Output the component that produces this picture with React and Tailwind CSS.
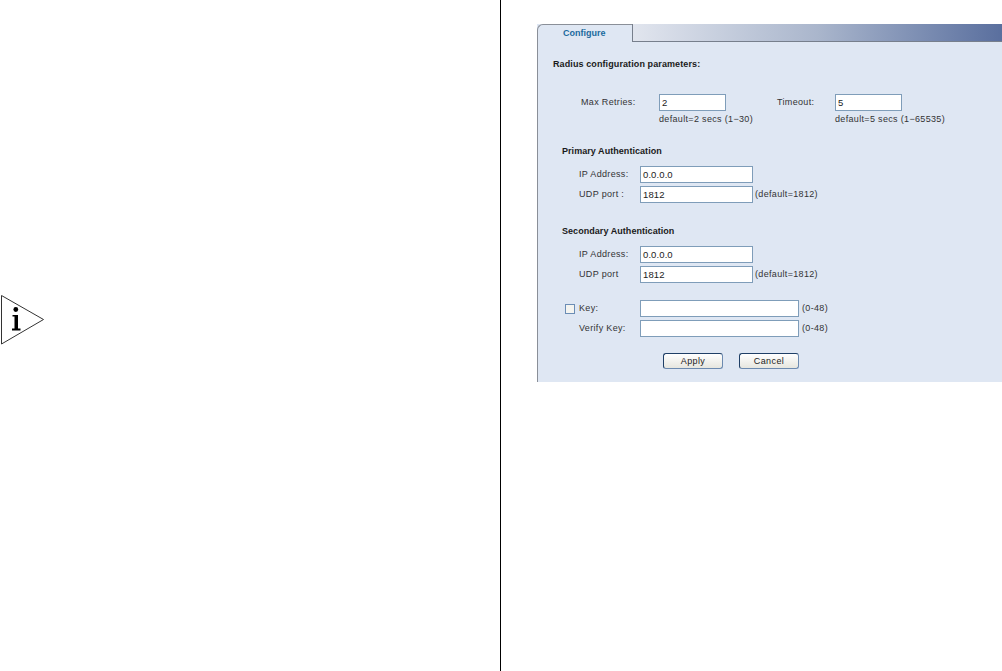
import React from 'react';

const Field = ({ value, className }) => (
  <div className={`h-[17px] border border-[#7f9db9] bg-white pl-[2px] text-[9.5px] leading-[15px] text-[#222] tracking-[0.1px] ${className}`}>
    {value}
  </div>
);

const Note = ({ children, className = '' }) => (
  <span className={`text-[9px] leading-[11px] tracking-[0.33px] text-[#333] whitespace-nowrap ${className}`}>{children}</span>
);

const FormRow = ({ label, value, note, labelWidth = 'w-[61px]', inputWidth = 'w-[113px]', noteGap = 'ml-[2px]' }) => (
  <div className="flex items-center">
    <Note className={`${labelWidth} shrink-0`}>{label}</Note>
    <Field value={value} className={inputWidth} />
    {note && <Note className={noteGap}>{note}</Note>}
  </div>
);

const SectionTitle = ({ children, className = 'tracking-[0.05px]' }) => (
  <div className={`text-[9px] leading-[11px] font-bold text-[#1a1a1a] ${className}`}>{children}</div>
);

const AuthBlock = ({ title, port }) => (
  <div className="pl-[24px]">
    <SectionTitle>{title}</SectionTitle>
    <div className="mt-[9px] flex flex-col gap-[3px] pl-[17px]">
      <FormRow label="IP Address:" value="0.0.0.0" />
      <FormRow label={port} value="1812" note="(default=1812)" />
    </div>
  </div>
);

const Button = ({ children }) => (
  <button className="h-[16px] w-[60px] rounded-[3px] border border-[#1f3f66] border-b-[#6c8ab0] border-r-[#6c8ab0] bg-gradient-to-b from-white to-[#e6e6df] text-[9px] leading-[13px] tracking-[0.4px] text-[#222]">
    {children}
  </button>
);

export default function App() {
  return (
    <div className="flex h-[671px] w-[1002px] overflow-hidden bg-white font-['Liberation_Sans',Arial,sans-serif]">
      {/* left page, only the note icon */}
      <div className="h-full w-[501px] shrink-0 border-r border-black pt-[295px]">
        <svg width="46" height="50" viewBox="0 0 46 50">
          <path d="M1.5 0.5 L43.5 24.5 L1.5 49 Z" fill="white" stroke="#333" strokeWidth="1" />
          <circle cx="15.8" cy="14.5" r="2.4" fill="black" />
          <path d="M12.5 20 H18 V33.5 H20.5 V35.5 H12 V33.5 H14.5 V21.5 H12.5 Z" fill="black" />
        </svg>
      </div>

      {/* right page, screenshot of the config form */}
      <div className="flex-1 pl-[36px] pt-[24px]">
        <div className="h-[358px] bg-[#dfe7f3]">
          <div className="flex h-[18px]">
            <div className="w-[95px] rounded-tl-[6px] border-l border-t border-[#8a8f98] bg-[#dfe7f3] pl-[25px] text-[9px] font-bold leading-[17px] text-[#1b6a9e]">
              Configure
            </div>
            <div className="flex-1 border-b border-[#777f8c] border-l bg-gradient-to-r from-[#e1e5ee] via-[#aab6cc] to-[#5a6f9e]" />
          </div>
          <div className="h-[340px] border-l border-[#8a8f98] pt-[17px]">
            <SectionTitle className="ml-[15px] tracking-[0.1px]">Radius configuration parameters:</SectionTitle>

            <div className="mt-[24px] flex pl-[43px]">
              <div className="w-[196px]">
                <FormRow label="Max Retries:" value="2" labelWidth="w-[78px]" inputWidth="w-[67px]" />
                <Note className="ml-[78px] block mt-[3px]">default=2 secs (1−30)</Note>
              </div>
              <div>
                <FormRow label="Timeout:" value="5" labelWidth="w-[58px]" inputWidth="w-[67px]" />
                <Note className="ml-[58px] block mt-[3px]">default=5 secs (1−65535)</Note>
              </div>
            </div>

            <div className="mt-[21px]">
              <AuthBlock title="Primary Authentication" port="UDP port :" />
            </div>
            <div className="mt-[23px]">
              <AuthBlock title="Secondary Authentication" port="UDP port" />
            </div>

            <div className="mt-[17px] flex flex-col gap-[3px] pl-[27px]">
              <div className="flex items-center">
                <div className="mr-[4px] h-[10px] w-[10px] border border-[#6b8db5] bg-[#f4f4f0]" />
                <FormRow label="Key:" value="" inputWidth="w-[159px]" note="(0-48)" noteGap="ml-[3px]" />
              </div>
              <div className="pl-[14px]">
                <FormRow label="Verify Key:" value="" inputWidth="w-[159px]" note="(0-48)" noteGap="ml-[3px]" />
              </div>
            </div>

            <div className="mt-[16px] flex gap-[16px] pl-[125px]">
              <Button>Apply</Button>
              <Button>Cancel</Button>
            </div>
          </div>
        </div>
      </div>
    </div>
  );
}
